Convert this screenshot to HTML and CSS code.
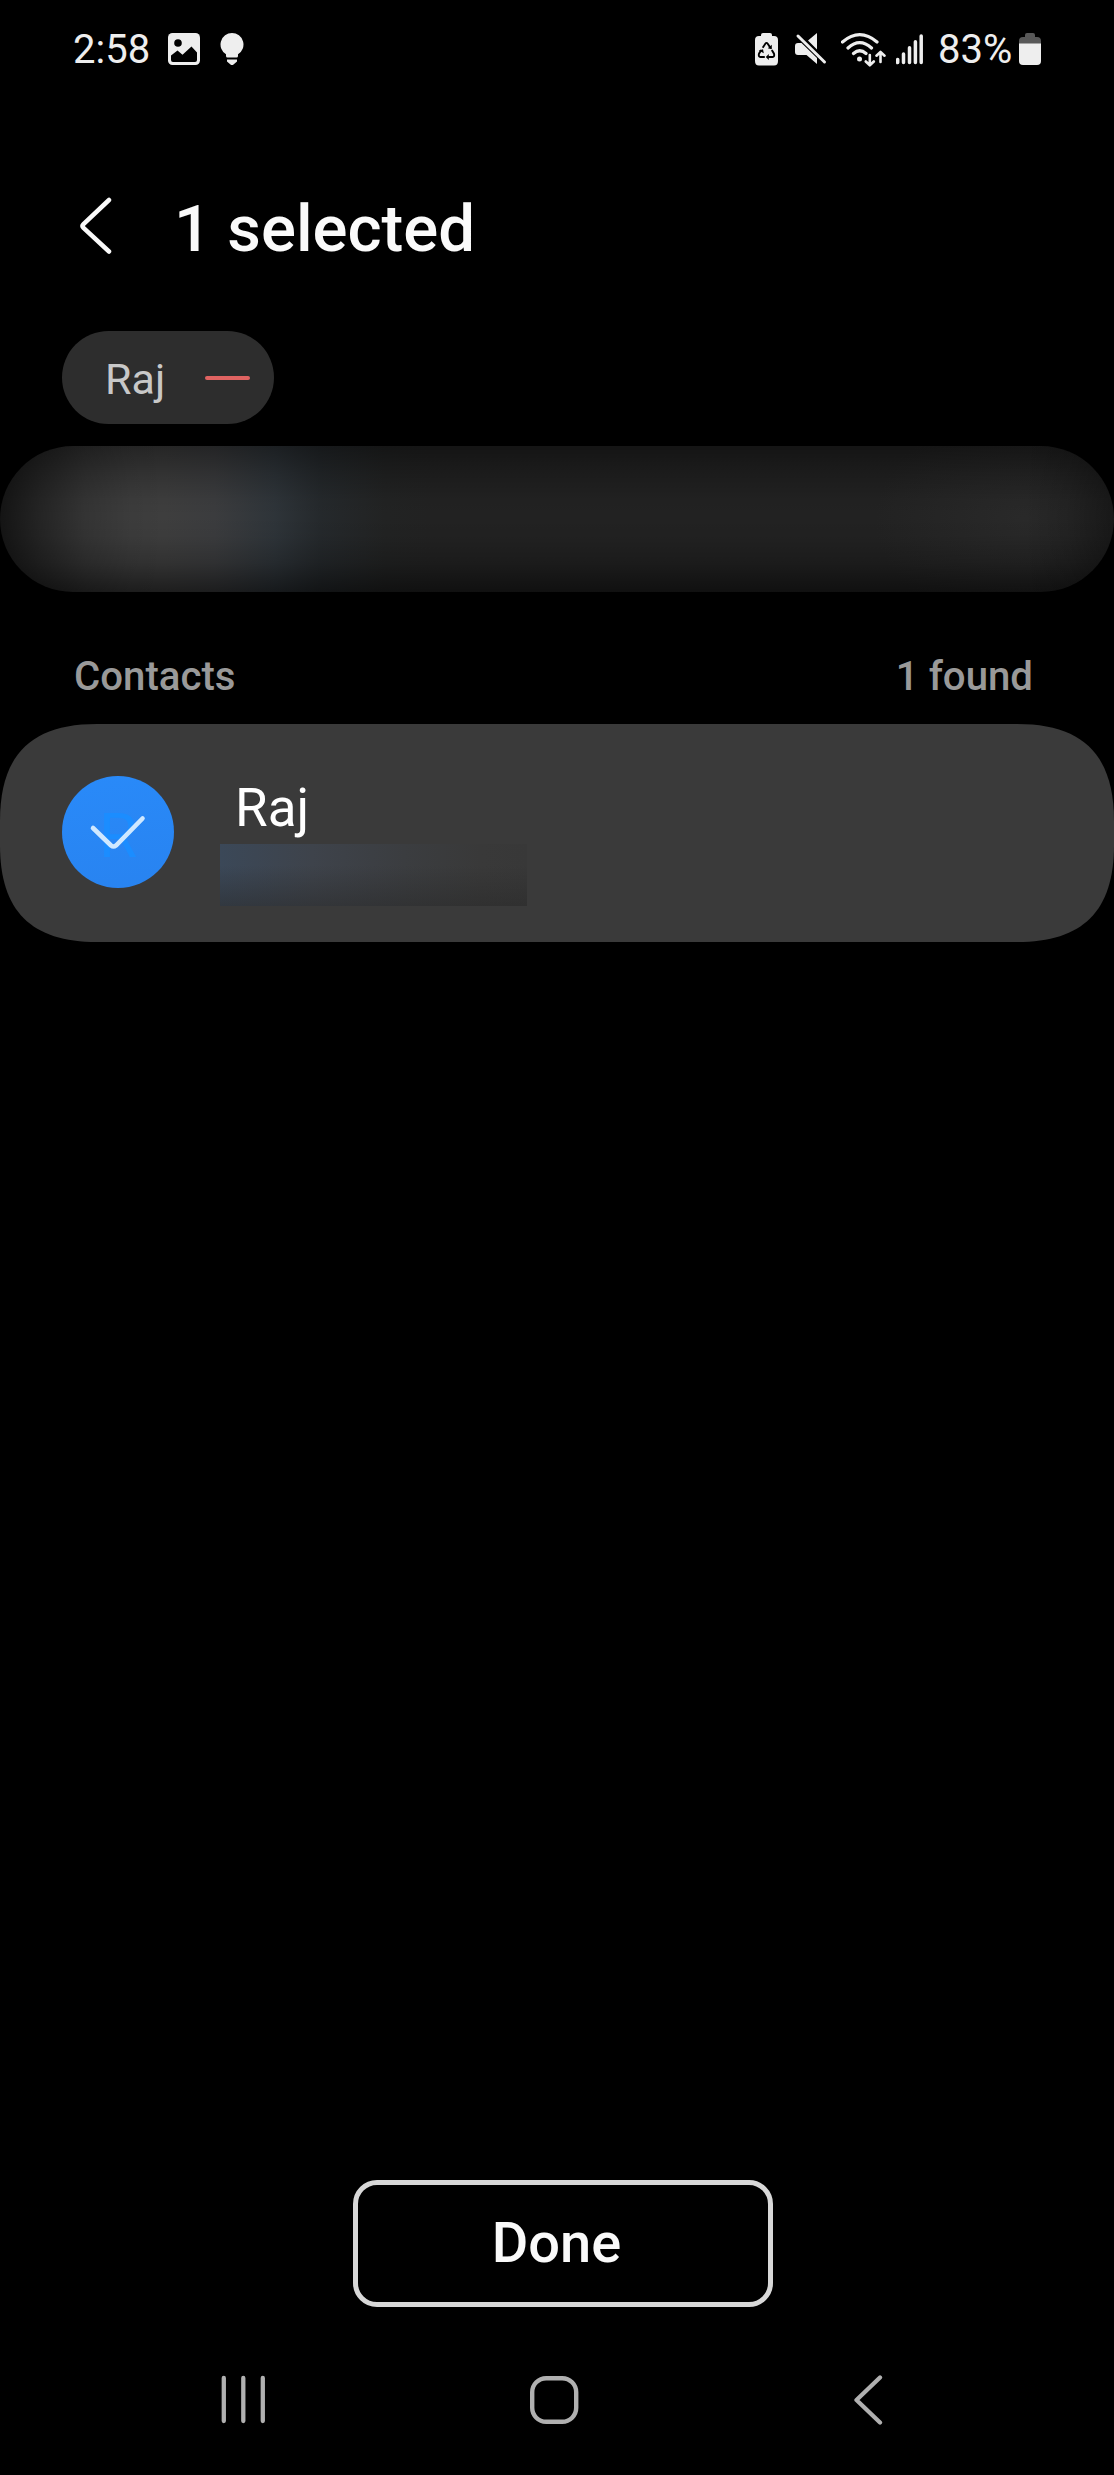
FILE: index.html
```html
<!DOCTYPE html>
<html lang="en">
<head>
<meta charset="utf-8">
<title>Select contacts</title>
<link rel="stylesheet" href="styles.css">
</head>
<body>
<div class="screen">
  <div class="status">
    <span class="time">2:58</span>
    <svg class="i-image" width="32" height="32" viewBox="0 0 32 32"><rect width="32" height="32" rx="4.5" fill="#eee"/><circle cx="10" cy="10" r="3.8" fill="#000"/><path d="M3 22.500 9.500 17.500 14.500 21.700 23.500 13.500 29 19.500V27Q29 29 27 29H5Q3 29 3 27Z" fill="#000"/></svg>
    <svg class="i-bulb" width="24" height="33" viewBox="0 0 24 33"><path d="M12 0A11.500 11.500 0 0 1 18 21.300V23Q18 24.500 16.500 24.500H7.500Q6 24.500 6 23V21.300A11.500 11.500 0 0 1 12 0ZM7 26.500H17V28.500L13.500 31.500Q12 32.600 10.500 31.500L7 28.500Z" fill="#eee"/></svg>
    <span class="spacer"></span>
    <svg class="i-saver" width="23" height="33" viewBox="0 0 23 33"><path d="M6 3V2Q6 0 8 0H15Q17 0 17 2V3H19Q23 3 23 7V28Q23 32.500 19 32.500H4Q0 32.500 0 28V7Q0 3 4 3Z" fill="#eee"/><g fill="none" stroke="#000" stroke-width="1.900"><path d="M7.700 14.800 10.300 10.700Q11.500 9 12.700 10.700L15.300 14.600M6.200 17 4 20.700Q3.200 23.700 5.500 24H9.800M13.200 24H17.500Q19.800 23.700 19 20.700L16.800 17"/></g><path d="M16.800 11.800V16.200L12.800 15.200ZM13.800 21V27L10.800 24ZM3.800 17.500 8 16.300 8.800 20.300Z" fill="#000"/></svg>
    <svg class="i-mute" width="32" height="32" viewBox="0 0 32 32"><path d="M0 13Q0 10 3 10H6.500L22 25V31L11.500 22H3Q0 22 0 19ZM22 0V16.500L13 7.500Z" fill="#eee"/><path d="M3 3 29.500 29" stroke="#eee" stroke-width="3" stroke-linecap="round"/></svg>
    <svg class="i-wifi" width="46" height="35" viewBox="0 0 46 35"><g fill="none" stroke="#eee" stroke-width="3.200" stroke-linecap="round"><path d="M1.500 10Q18.700-4.600 36 10M7 16Q18.700 5.200 30.500 16M12.500 21.500Q18.700 16 25 21.500"/></g><circle cx="18.500" cy="27" r="2.500" fill="#eee"/><path d="M28.800 23V33M24.800 29.500 28.800 33.300 32.800 29.500M39.500 30V20.500M35.500 23.700 39.500 19.900 43.500 23.700" fill="none" stroke="#eee" stroke-width="2.600" stroke-linecap="round" stroke-linejoin="round"/></svg>
    <svg class="i-signal" width="28" height="31" viewBox="0 0 28 31"><path d="M1.700 25.500V28.600M7.500 20V28.600M13.500 13.700V28.600M19.400 7.700V28.600M25.200 2V28.600" stroke="#eee" stroke-width="3.500" stroke-linecap="round"/></svg>
    <span class="pct">83%</span>
    <svg class="i-batt" width="22" height="32" viewBox="0 0 22 32"><path d="M0 11V8Q0 4 4 4H6V2Q6 0 8 0H14Q16 0 16 2V4H18Q22 4 22 8V11Z" fill="#585858"/><path d="M0 10.500H22V28Q22 32 18 32H4Q0 32 0 28Z" fill="#eee"/></svg>
  </div>

  <header class="header">
    <svg width="34" height="60" viewBox="0 0 34 60"><path d="M30 4 4.500 28Q2.500 30 4.500 32L30 55.500" fill="none" stroke="#fafafa" stroke-width="4.500" stroke-linecap="round"/></svg>
    <h1 class="title">1 selected</h1>
  </header>

  <div class="chip"><span class="chip-name">Raj</span><span class="minus"></span></div>
  <div class="search"></div>

  <div class="section"><span>Contacts</span><span class="count">1 found</span></div>

  <div class="card">
    <div class="avatar">
      <span class="letter">R</span>
      <svg class="check" width="112" height="112" viewBox="0 0 112 112"><path d="M31 52 49 69.500Q51.500 71.500 54 69.500L80.500 42.500" fill="none" stroke="#cfe8ff" stroke-width="4.600" stroke-linecap="round"/></svg>
    </div>
    <div class="info">
      <div class="name">Raj</div>
      <div class="number"></div>
    </div>
  </div>

  <button class="done">Done</button>

  <nav class="nav">
    <svg width="46" height="50" viewBox="0 0 46 50"><path d="M3.800 3V46M23.300 3V46M42.800 3V46" stroke="#b0b0b0" stroke-width="4.300" stroke-linecap="round"/></svg>
    <svg class="home" width="50" height="50" viewBox="0 0 50 50"><rect x="3.200" y="3.200" width="44" height="43.600" rx="14" fill="none" stroke="#b0b0b0" stroke-width="4.400"/></svg>
    <svg width="30" height="52" viewBox="0 0 30 52"><path d="M27 3.500 3.500 26 27 48.500" fill="none" stroke="#b0b0b0" stroke-width="4.300" stroke-linecap="round" stroke-linejoin="round"/></svg>
  </nav>
</div>
</body>
</html>
```
FILE: styles.css
```css
* { box-sizing: border-box; }
body { margin: 0; background: #000; font-family: Roboto, "Liberation Sans", sans-serif; }
svg { display: block; flex: none; }

.screen { width: 1114px; height: 2475px; display: flex; flex-direction: column; background: #000; overflow: hidden; }

.status { height: 98px; flex: none; display: flex; align-items: center; padding: 0 73px; color: #eee; font-size: 40px; line-height: 48px; }
.time { width: 77px; white-space: nowrap; padding-top: 1px; }
.i-image { margin-left: 18px; }
.i-bulb { margin-left: 20px; }
.spacer { flex: 1; }
.i-mute { margin-left: 17px; }
.i-wifi { margin-left: 14px; }
.i-signal { margin-left: 9px; }
.pct { margin-left: 14px; width: 73px; white-space: nowrap; padding-top: 2px; }
.i-batt { margin-left: 8px; }

.header { height: 136px; flex: none; margin-top: 62px; padding-left: 79px; display: flex; align-items: center; gap: 61px; }
.header svg { margin-top: -4px; }
.title { margin: 0; padding-top: 2px; font-size: 65.3px; font-weight: 500; line-height: 80px; color: #fafafa; }

.chip { width: 212px; height: 93px; flex: none; margin: 35px 0 0 62px; padding: 0 24px 0 43px; border-radius: 47px; background: #2d2d2d; display: flex; align-items: center; justify-content: space-between; }
.chip-name { padding-top: 3px; font-size: 43px; line-height: 50px; color: #c8c8c8; }
.minus { width: 45px; height: 4px; border-radius: 2px; background: #df6361; }

.search {
  height: 146px; flex: none; margin-top: 22px; border-radius: 73px;
  background:
    linear-gradient(90deg, rgba(0,0,0,.68), rgba(0,0,0,.42) 40px, rgba(0,0,0,.17) 85px, rgba(0,0,0,.04) 130px, rgba(0,0,0,0) 165px),
    linear-gradient(270deg, rgba(0,0,0,.35), rgba(0,0,0,.12) 45px, rgba(0,0,0,0) 90px),
    linear-gradient(180deg, rgba(0,0,0,.4), rgba(0,0,0,.18) 20%, rgba(0,0,0,.04) 36%, rgba(0,0,0,0) 48%, rgba(0,0,0,.04) 62%, rgba(0,0,0,.2) 80%, rgba(0,0,0,.52)),
    radial-gradient(ellipse 150px 110px at 1025px 74px, rgba(46,46,46,.6), rgba(46,46,46,0)),
    linear-gradient(90deg, #3e3e3e 0, #3e3e3e 165px, #3b3c3e 215px, #2e3439 275px, #25292c 320px, #222323 385px, #222 430px);
}

.section { height: 132px; flex: none; padding: 59px 81px 0 74px; display: flex; justify-content: space-between; font-size: 40.2px; font-weight: 500; line-height: 52px; color: #999; }

.card { height: 218px; flex: none; padding: 48px 0 0 62px; display: flex; background: #3a3a3a; clip-path: path("M0 97C0 31 31 0 97 0H1017C1083 0 1114 31 1114 97V121C1114 187 1083 218 1017 218H97C31 218 0 187 0 121Z"); }
.avatar { width: 112px; height: 112px; flex: none; margin-top: 4px; position: relative; border-radius: 50%; background: linear-gradient(170deg, #298af9, #2883f0); }
.letter { display: block; padding-left: 37px; padding-top: 2px; font-size: 62px; line-height: 116px; height: 112px; color: #1b8dff; }
.check { position: absolute; left: 0; top: 0; }
.info { margin-left: 46px; }
.name { padding-left: 15px; font-size: 53px; line-height: 72px; color: #fff; }
.number { width: 307px; height: 62px; background: linear-gradient(180deg, rgba(40,40,40,0) 35%, rgba(40,40,40,.5)), linear-gradient(90deg, #3b4858, #3e434b 30%, #3b3d40 60%, #393939 85%, #383838); }

.done { width: 420px; height: 127px; flex: none; margin: auto 0 18px 353px; padding: 0 13px 2px 0; border: 5px solid #d8d8d8; border-radius: 24px; background: none; color: #fafafa; font: 500 56px/66px Roboto, "Liberation Sans", sans-serif; }

.nav { height: 150px; flex: none; padding: 0 231px 0 220px; display: flex; align-items: center; justify-content: space-between; }
.home { margin-right: 11px; }
```
